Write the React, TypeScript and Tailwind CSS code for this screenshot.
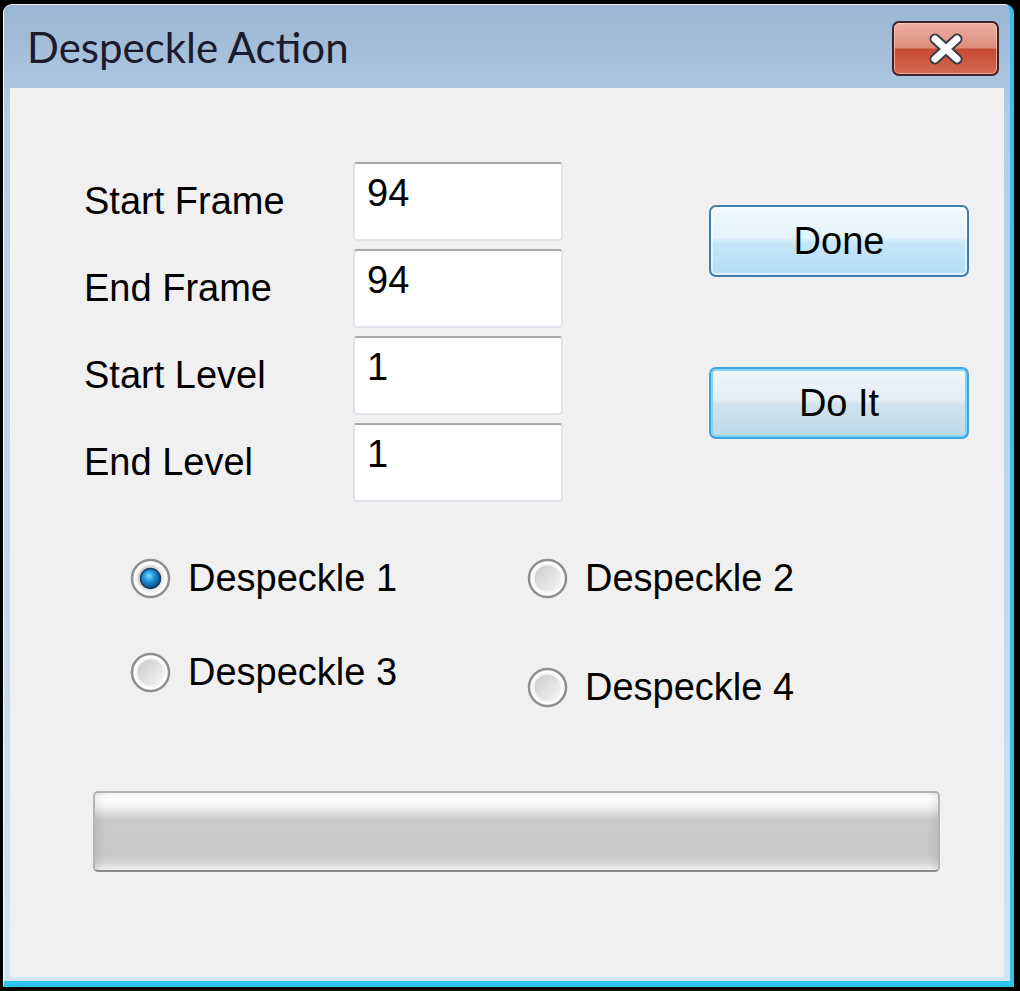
import React from "react";

const labelFont = "font-['Liberation_Sans',Arial,sans-serif] text-[38px] leading-[43px] text-black";

const fields = [
  { label: "Start Frame", value: "94" },
  { label: "End Frame", value: "94" },
  { label: "Start Level", value: "1" },
  { label: "End Level", value: "1" },
];

function CloseGlyph() {
  return (
    <svg width="42" height="36" viewBox="0 0 42 36">
      <path d="M10 8 L32 28 M32 8 L10 28" stroke="#3b3b46" strokeWidth="11" strokeLinecap="round" />
      <path d="M10 8 L32 28 M32 8 L10 28" stroke="#ffffff" strokeWidth="7" strokeLinecap="round" />
    </svg>
  );
}

function Radio({ checked }: { checked?: boolean }) {
  return (
    <svg width="41" height="41" viewBox="0 0 41 41" className="shrink-0">
      <defs>
        <linearGradient id="rg-fill" x1="0" y1="0" x2="1" y2="1">
          <stop offset="0" stopColor="#c9c9c9" />
          <stop offset="1" stopColor="#f7f7f7" />
        </linearGradient>
        <radialGradient id="rg-dot" cx="0.42" cy="0.38" r="0.65">
          <stop offset="0" stopColor="#7fdcff" />
          <stop offset="0.45" stopColor="#1f8fd6" />
          <stop offset="1" stopColor="#0b3f78" />
        </radialGradient>
      </defs>
      <circle cx="20.5" cy="20.5" r="18.5" fill="#ffffff" stroke="#8e8f8f" strokeWidth="2.5" />
      <circle cx="20.5" cy="20.5" r="14" fill="url(#rg-fill)" stroke="#f4f4f4" strokeWidth="2" />
      {checked && <circle cx="20.5" cy="20.5" r="10" fill="url(#rg-dot)" stroke="#173a63" strokeWidth="1.5" />}
    </svg>
  );
}

function RadioItem({ label, checked }: { label: string; checked?: boolean }) {
  return (
    <div className="flex items-center gap-[17px]">
      <Radio checked={checked} />
      <span className={labelFont}>{label}</span>
    </div>
  );
}

export default function App() {
  return (
    <div className="w-[1020px] h-[991px] bg-black pt-[4px] pl-[3px] pr-[6px] pb-[4px]">
      <div className="h-full flex flex-col rounded-t-[9px] border-l border-t border-l-white border-t-[#e8f0f8] border-r-[4px] border-r-[#2ec4ec] border-b-[6px] border-b-[#2ec4ec] bg-[linear-gradient(to_bottom,#9bb6d3_0%,#b5cce5_12%,#c4d7ec_60%,#d6e3f1_100%)]">
        {/* title bar */}
        <div className="h-[83px] shrink-0 flex items-center justify-between pl-[23px] pr-[11px]">
          <span className="font-['Lato','Noto_Sans',sans-serif] text-[42px] text-[#1c1b2e] mt-[2px]">
            Despeckle Action
          </span>
          <div className="mt-[4px] w-[107px] h-[55px] rounded-[7px] border-2 border-[#42222a] flex items-center justify-center bg-[linear-gradient(to_bottom,#ecb0a4_0%,#de8d7c_48%,#c64a33_52%,#d46a51_100%)] shadow-[inset_0_0_0_1px_rgba(255,220,210,0.6)]">
            <CloseGlyph />
          </div>
        </div>

        {/* client area */}
        <div className="flex-1 ml-[6px] mr-[6px] mb-[4px] bg-[#f0f0f0] pt-[74px]">
          <div className="flex">
            <div className="ml-[74px] flex flex-col gap-[8px]">
              {fields.map((f) => (
                <div key={f.label} className="flex items-center h-[79px]">
                  <span className={`w-[269px] ${labelFont}`}>{f.label}</span>
                  <div className="w-[210px] h-[79px] rounded-[4px] bg-white border-2 border-[#e0e4ea] border-t-[#a9a9a9] pl-[12px] pt-[8px]">
                    <span className={labelFont}>{f.value}</span>
                  </div>
                </div>
              ))}
            </div>

            <div className="ml-[146px] pt-[43px] flex flex-col gap-[90px]">
              <button className="w-[260px] h-[72px] rounded-[7px] border-2 border-[#3c7fb1] bg-[linear-gradient(to_bottom,#f2f9fe_0%,#e4f3fc_45%,#c7e7fa_52%,#b3dcf4_100%)] shadow-[inset_0_0_0_2px_rgba(255,255,255,0.55)] flex items-center justify-center">
                <span className={labelFont}>Done</span>
              </button>
              <button className="w-[260px] h-[72px] rounded-[7px] border-2 border-[#3aa6e0] bg-[linear-gradient(to_bottom,#f1f5f8_0%,#e5eef4_45%,#d0e3ee_52%,#bed9e8_100%)] shadow-[inset_0_0_0_2px_#7fd4f7] flex items-center justify-center">
                <span className={labelFont}>Do It</span>
              </button>
            </div>
          </div>

          <div className="flex ml-[120px] mt-[55px]">
            <div className="w-[397px] flex flex-col gap-[51px]">
              <RadioItem label="Despeckle 1" checked />
              <RadioItem label="Despeckle 3" />
            </div>
            <div className="flex flex-col gap-[66px]">
              <RadioItem label="Despeckle 2" />
              <RadioItem label="Despeckle 4" />
            </div>
          </div>

          <div className="ml-[83px] mt-[82px] w-[847px] h-[81px] rounded-[5px] border-2 border-[#b4b4b4] border-b-[#8a8a8a] bg-[linear-gradient(to_bottom,#f2f2f2_0%,#ffffff_8%,#eeeeee_20%,#cbcbcb_34%,#c8c8c8_80%,#d4d4d4_90%,#f3f3f3_100%)] shadow-[inset_10px_0_8px_-6px_rgba(0,0,0,0.08),inset_-10px_0_8px_-6px_rgba(0,0,0,0.08)]" />
        </div>
      </div>
    </div>
  );
}
